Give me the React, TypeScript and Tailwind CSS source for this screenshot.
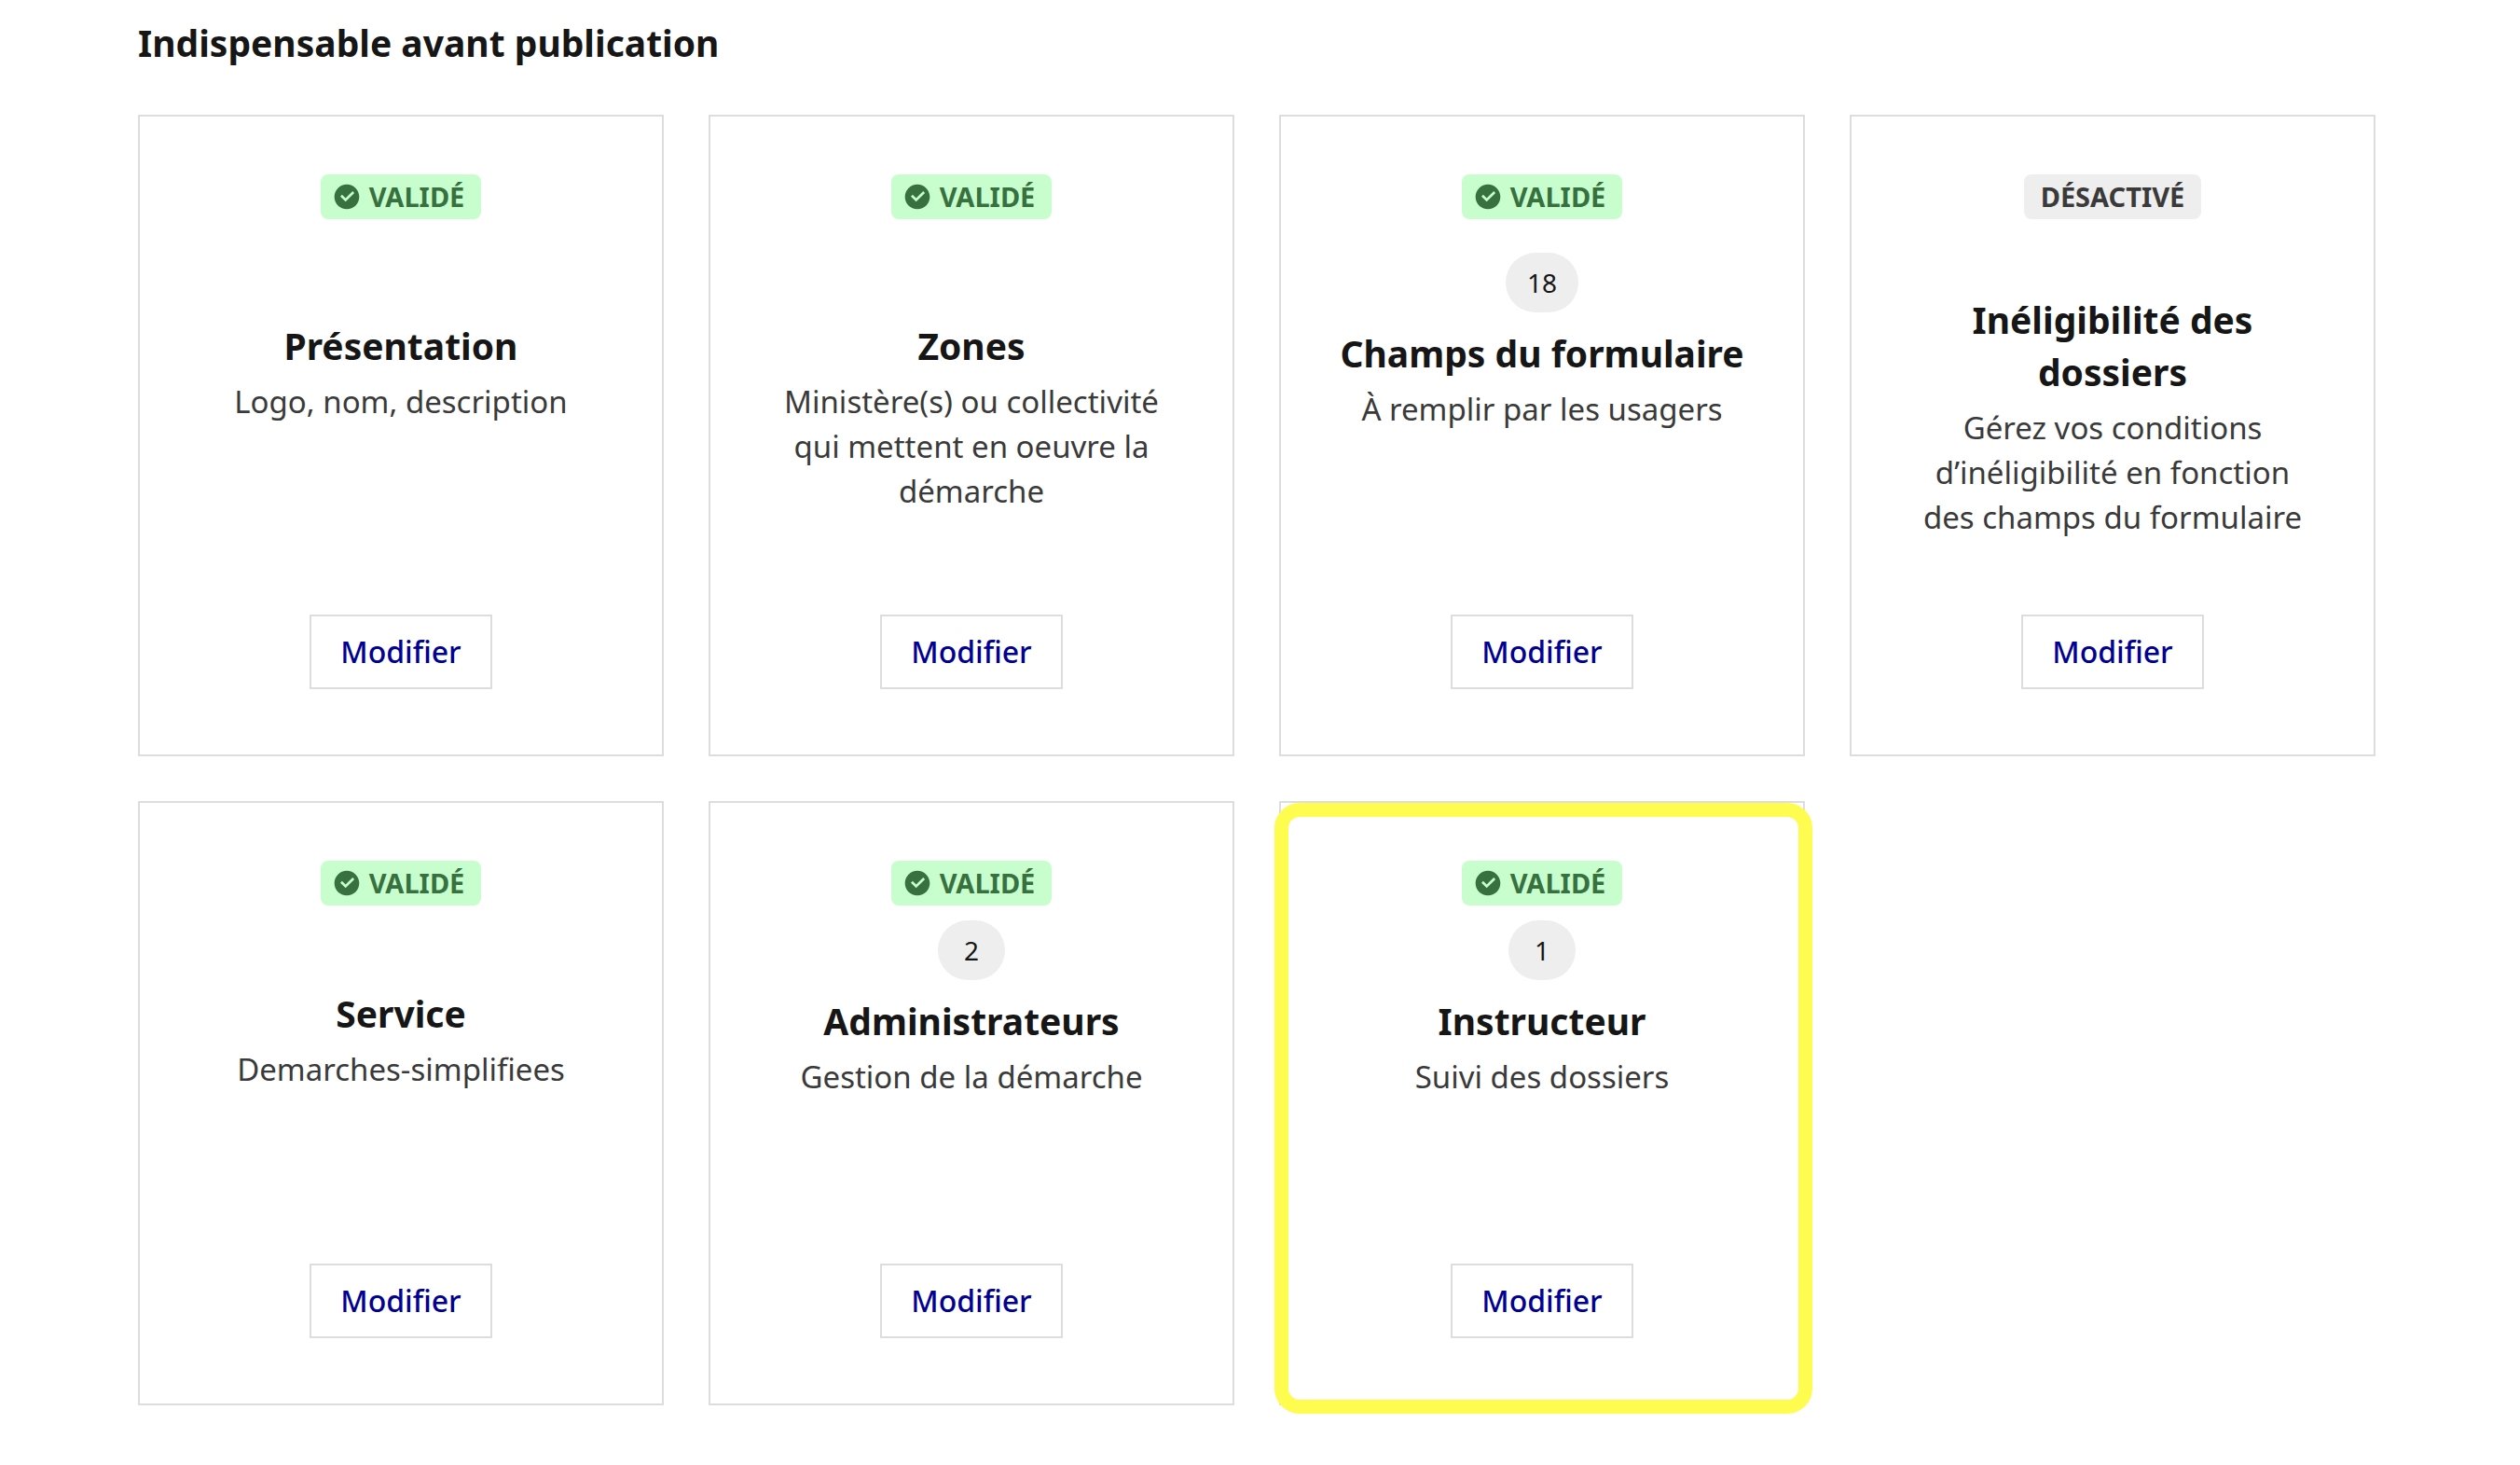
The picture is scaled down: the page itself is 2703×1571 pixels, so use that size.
type Tile = {
  title: string;
  description: string;
  href: string;
  valid: boolean;
  count?: number;
  highlighted?: boolean;
};

const TILES: Tile[] = [
  { title: "Présentation", description: "Logo, nom, description", href: "#presentation", valid: true },
  { title: "Zones", description: "Ministère(s) ou collectivité qui mettent en oeuvre la démarche", href: "#zones", valid: true },
  { title: "Champs du formulaire", description: "À remplir par les usagers", href: "#champs", valid: true, count: 18 },
  { title: "Inéligibilité des dossiers", description: "Gérez vos conditions d’inéligibilité en fonction des champs du formulaire", href: "#ineligibilite", valid: false },
  { title: "Service", description: "Demarches-simplifiees", href: "#service", valid: true },
  { title: "Administrateurs", description: "Gestion de la démarche", href: "#administrateurs", valid: true, count: 2 },
  { title: "Instructeur", description: "Suivi des dossiers", href: "#instructeur", valid: true, count: 1, highlighted: true },
];

function CheckCircle() {
  return (
    <svg viewBox="0 0 24 24" className="size-8 shrink-0" fill="currentColor" aria-hidden="true">
      <path
        fillRule="evenodd"
        d="M12 22C6.477 22 2 17.523 2 12S6.477 2 12 2s10 4.477 10 10-4.477 10-10 10Zm-.997-6 7.07-7.071-1.413-1.414-5.657 5.657-2.829-2.829-1.414 1.414L11.003 16Z"
      />
    </svg>
  );
}

function StatusBadge({ valid }: { valid: boolean }) {
  return valid ? (
    <p className="flex h-12 items-center gap-2 rounded-lg bg-[#c8fecd] pr-[18px] pl-3 text-[29px] font-bold text-[#377140]">
      <CheckCircle />
      VALIDÉ
    </p>
  ) : (
    <p className="flex h-12 items-center rounded-lg bg-[#eeeeee] px-[18px] text-[29px] font-bold text-[#3a3a3a]">DÉSACTIVÉ</p>
  );
}

function TileCard({ tile }: { tile: Tile }) {
  const hasCount = tile.count !== undefined;
  return (
    <li className="relative flex flex-col items-center border-2 border-[#dddddd] bg-white px-[60px] pt-[62px] pb-[70px] text-center">
      <StatusBadge valid={tile.valid} />
      <div className={`flex grow flex-col items-center justify-center ${hasCount ? "pb-16" : ""}`}>
        {hasCount && (
          <p className="mb-4 flex h-16 min-w-[72px] items-center justify-center rounded-full bg-[#eeeeee] px-[23px] text-[28px] text-[#161616]">
            {tile.count}
          </p>
        )}
        <h3 className="text-[39px] leading-[56px] font-bold text-[#161616]">{tile.title}</h3>
        <p className="mt-2 min-h-36 px-2 text-[33px] leading-[48px] text-[#3a3a3a]">{tile.description}</p>
      </div>
      <a
        href={tile.href}
        aria-label={`Modifier ${tile.title}`}
        className="flex h-20 items-center border-2 border-[#dddddd] px-[31px] text-[32px] font-medium text-[#000091]"
      >
        Modifier
      </a>
      {tile.highlighted && (
        <span className="pointer-events-none absolute top-0 -right-[10px] -bottom-[11px] -left-[7px] rounded-[27px] border-[15px] border-[#fffc50]" />
      )}
    </li>
  );
}

export default function App() {
  return (
    <main className="min-h-screen bg-white pt-[18px] pr-[155px] pb-16 pl-[148px] font-['Noto_Sans',sans-serif]">
      <h2 className="text-[39px] leading-[56px] font-bold text-[#161616]">Indispensable avant publication</h2>
      <ul className="mt-[49px] grid grid-cols-4 grid-rows-[minmax(688px,auto)_minmax(648px,auto)] gap-12">
        {TILES.map((tile) => (
          <TileCard key={tile.title} tile={tile} />
        ))}
      </ul>
    </main>
  );
}
